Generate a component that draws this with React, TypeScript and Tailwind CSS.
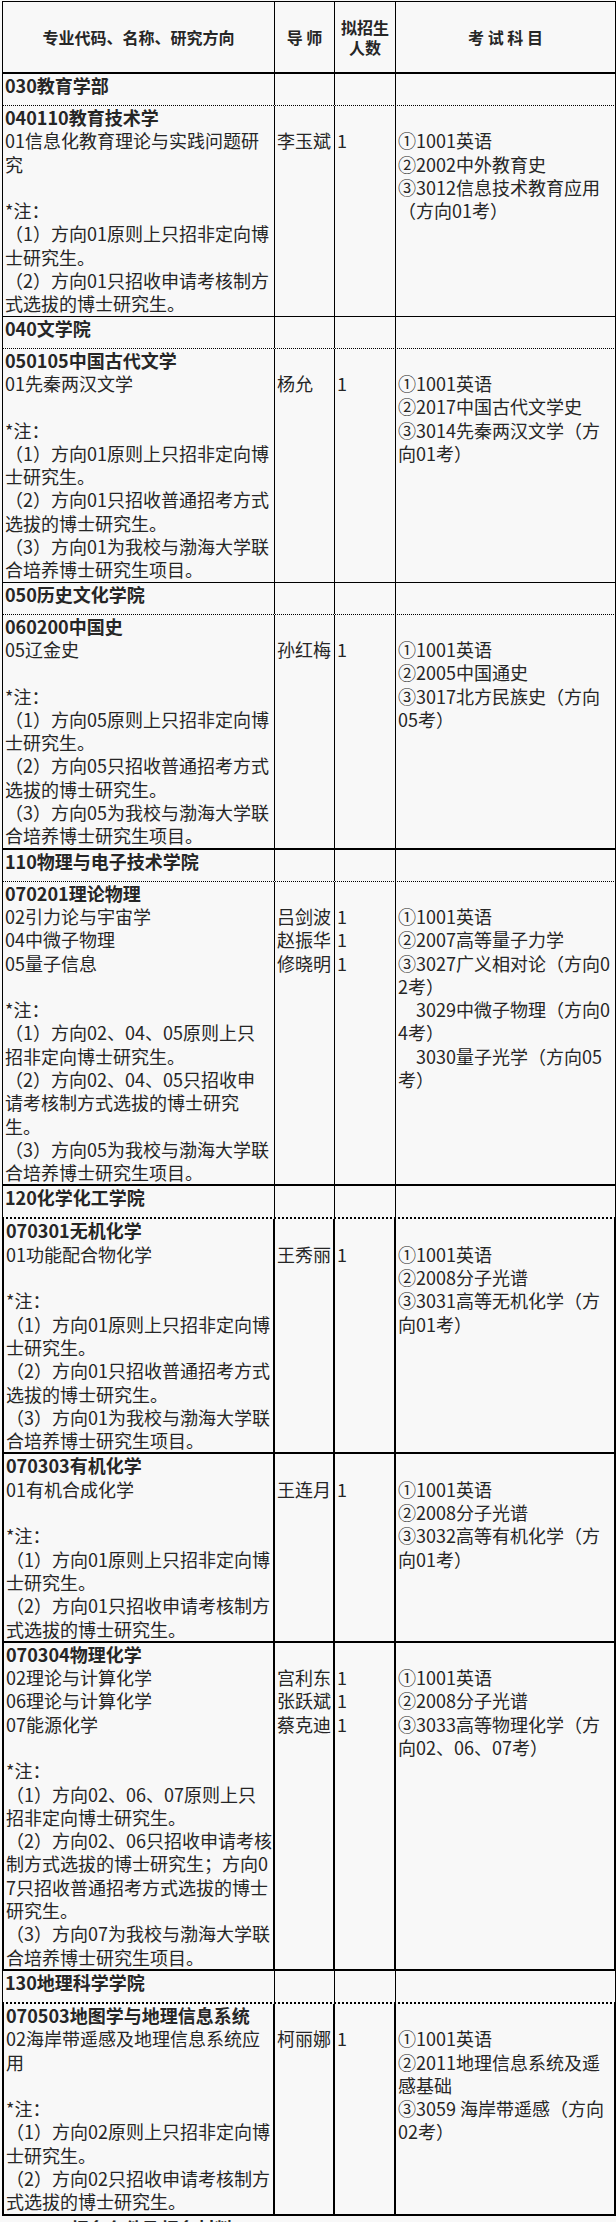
type Section = { kind: "section"; text: string; heavy?: boolean };
type Major = {
  kind: "major";
  lines: string[];
  teachers: string[];
  counts: string[];
  exams: string[];
  thickBottom?: boolean;
  heavy?: boolean;
};
type Row = Section | Major;

const rows: Row[] = [
  { kind: "section", text: "030教育学部" },
  {
    kind: "major",
    lines: [
      "040110教育技术学",
      "01信息化教育理论与实践问题研",
      "究",
      "",
      "*注：",
      "（1）方向01原则上只招非定向博",
      "士研究生。",
      "（2）方向01只招收申请考核制方",
      "式选拔的博士研究生。",
    ],
    teachers: ["李玉斌"],
    counts: ["1"],
    exams: ["①1001英语", "②2002中外教育史", "③3012信息技术教育应用", "（方向01考）"],
  },
  { kind: "section", text: "040文学院" },
  {
    kind: "major",
    lines: [
      "050105中国古代文学",
      "01先秦两汉文学",
      "",
      "*注：",
      "（1）方向01原则上只招非定向博",
      "士研究生。",
      "（2）方向01只招收普通招考方式",
      "选拔的博士研究生。",
      "（3）方向01为我校与渤海大学联",
      "合培养博士研究生项目。",
    ],
    teachers: ["杨允"],
    counts: ["1"],
    exams: ["①1001英语", "②2017中国古代文学史", "③3014先秦两汉文学（方", "向01考）"],
  },
  { kind: "section", text: "050历史文化学院" },
  {
    kind: "major",
    lines: [
      "060200中国史",
      "05辽金史",
      "",
      "*注：",
      "（1）方向05原则上只招非定向博",
      "士研究生。",
      "（2）方向05只招收普通招考方式",
      "选拔的博士研究生。",
      "（3）方向05为我校与渤海大学联",
      "合培养博士研究生项目。",
    ],
    teachers: ["孙红梅"],
    counts: ["1"],
    exams: ["①1001英语", "②2005中国通史", "③3017北方民族史（方向", "05考）"],
    thickBottom: true,
  },
  { kind: "section", text: "110物理与电子技术学院" },
  {
    kind: "major",
    lines: [
      "070201理论物理",
      "02引力论与宇宙学",
      "04中微子物理",
      "05量子信息",
      "",
      "*注：",
      "（1）方向02、04、05原则上只",
      "招非定向博士研究生。",
      "（2）方向02、04、05只招收申",
      "请考核制方式选拔的博士研究",
      "生。",
      "（3）方向05为我校与渤海大学联",
      "合培养博士研究生项目。",
    ],
    teachers: ["吕剑波", "赵振华", "修晓明"],
    counts: ["1", "1", "1"],
    exams: [
      "①1001英语",
      "②2007高等量子力学",
      "③3027广义相对论（方向0",
      "2考）",
      "　3029中微子物理（方向0",
      "4考）",
      "　3030量子光学（方向05",
      "考）",
    ],
    thickBottom: true,
  },
  { kind: "section", text: "120化学化工学院", heavy: true },
  {
    kind: "major",
    lines: [
      "070301无机化学",
      "01功能配合物化学",
      "",
      "*注：",
      "（1）方向01原则上只招非定向博",
      "士研究生。",
      "（2）方向01只招收普通招考方式",
      "选拔的博士研究生。",
      "（3）方向01为我校与渤海大学联",
      "合培养博士研究生项目。",
    ],
    teachers: ["王秀丽"],
    counts: ["1"],
    exams: ["①1001英语", "②2008分子光谱", "③3031高等无机化学（方", "向01考）"],
    thickBottom: true,
    heavy: true,
  },
  {
    kind: "major",
    lines: [
      "070303有机化学",
      "01有机合成化学",
      "",
      "*注：",
      "（1）方向01原则上只招非定向博",
      "士研究生。",
      "（2）方向01只招收申请考核制方",
      "式选拔的博士研究生。",
    ],
    teachers: ["王连月"],
    counts: ["1"],
    exams: ["①1001英语", "②2008分子光谱", "③3032高等有机化学（方", "向01考）"],
    thickBottom: true,
    heavy: true,
  },
  {
    kind: "major",
    lines: [
      "070304物理化学",
      "02理论与计算化学",
      "06理论与计算化学",
      "07能源化学",
      "",
      "*注：",
      "（1）方向02、06、07原则上只",
      "招非定向博士研究生。",
      "（2）方向02、06只招收申请考核",
      "制方式选拔的博士研究生；方向0",
      "7只招收普通招考方式选拔的博士",
      "研究生。",
      "（3）方向07为我校与渤海大学联",
      "合培养博士研究生项目。",
    ],
    teachers: ["宫利东", "张跃斌", "蔡克迪"],
    counts: ["1", "1", "1"],
    exams: ["①1001英语", "②2008分子光谱", "③3033高等物理化学（方", "向02、06、07考）"],
    thickBottom: true,
    heavy: true,
  },
  { kind: "section", text: "130地理科学学院", heavy: true },
  {
    kind: "major",
    lines: [
      "070503地图学与地理信息系统",
      "02海岸带遥感及地理信息系统应",
      "用",
      "",
      "*注：",
      "（1）方向02原则上只招非定向博",
      "士研究生。",
      "（2）方向02只招收申请考核制方",
      "式选拔的博士研究生。",
    ],
    teachers: ["柯丽娜"],
    counts: ["1"],
    exams: ["①1001英语", "②2011地理信息系统及遥", "感基础", "③3059 海岸带遥感（方向", "02考）"],
    thickBottom: true,
    heavy: true,
  },
];

const Lines = ({ items, boldFirst }: { items: string[]; boldFirst?: boolean }) => (
  <>
    {items.map((t, i) => (
      <div key={i} className={`whitespace-pre ${boldFirst && i === 0 ? "font-bold" : ""}`}>
        {t === "" ? "\u00a0" : t}
      </div>
    ))}
  </>
);

const SectionRow = ({ row }: { row: Section }) => (
  <div className={`flex border-black border-dotted ${row.heavy ? "border-b-2" : "border-b"}`}>
    <div className="w-[273px] h-[31px] border-l border-r border-solid border-black pl-[2px] font-bold whitespace-pre">
      {row.text}
    </div>
    <div className="w-[60px] h-[31px] border-r border-solid border-black" />
    <div className="w-[61px] h-[31px] border-r border-solid border-black" />
    <div className="w-[220px] h-[31px] border-r border-solid border-black" />
  </div>
);

const MajorRow = ({ row }: { row: Major }) => {
  const v = row.heavy ? "border-r-2" : "border-r";
  return (
    <div className={`flex border-black border-solid ${row.thickBottom ? "border-b-2" : "border-b"}`}>
      <div className={`w-[273px] ${v} ${row.heavy ? "border-l-2" : "border-l"} border-black pl-[2px]`}>
        <Lines items={row.lines} boldFirst />
      </div>
      <div className={`w-[60px] ${v} border-black pl-[2px] pt-[23.3px]`}>
        <Lines items={row.teachers} />
      </div>
      <div className={`w-[61px] ${v} border-black pl-[2px] pt-[23.3px]`}>
        <Lines items={row.counts} />
      </div>
      <div className={`w-[220px] ${v} border-black pl-[2px] pt-[23.3px]`}>
        <Lines items={row.exams} />
      </div>
    </div>
  );
};

export default function App() {
  return (
    <div className="min-h-screen bg-[#f8f8f8] pt-[1px] pl-[2px] font-['Noto_Sans_CJK_SC',sans-serif] text-[18px] leading-[23.3px] text-[#262626]">
      <div className="w-[614px] border-t border-black">
        <div className="flex border-b-2 border-black font-bold text-[16px] leading-[20px]">
          <div className="w-[273px] h-[70px] border-l border-r border-black flex items-center justify-center">
            专业代码、名称、研究方向
          </div>
          <div className="w-[60px] h-[70px] border-r border-black flex items-center justify-center whitespace-pre">
            导 师
          </div>
          <div className="w-[61px] h-[70px] border-r border-black flex flex-col items-center justify-center">
            <span>拟招生</span>
            <span>人数</span>
          </div>
          <div className="w-[220px] h-[70px] border-r border-black flex items-center justify-center whitespace-pre">
            考 试 科 目
          </div>
        </div>
        {rows.map((row, i) =>
          row.kind === "section" ? <SectionRow key={i} row={row} /> : <MajorRow key={i} row={row} />
        )}
      </div>
      <div className="pl-[33px] pt-[1px] font-bold text-[18px]">二、报名条件及报名材料</div>
    </div>
  );
}
